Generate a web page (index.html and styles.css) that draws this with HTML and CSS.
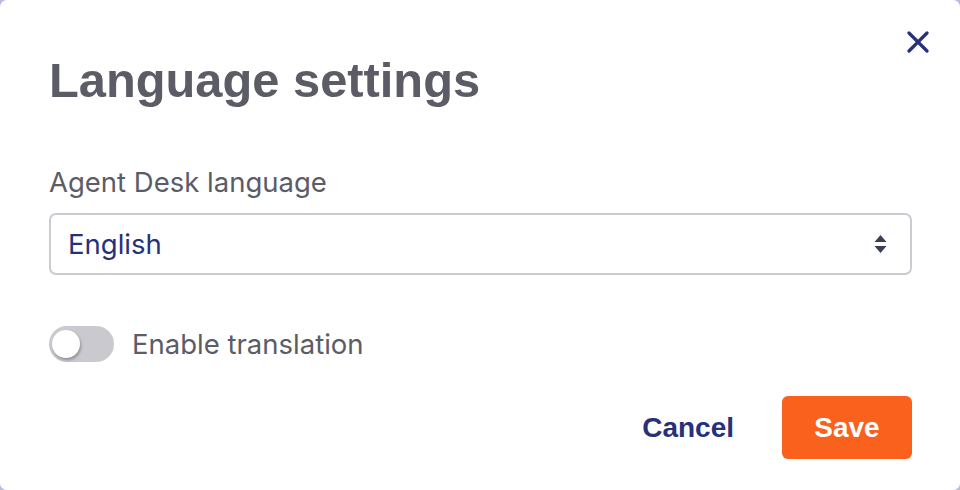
FILE: index.html
```html
<!DOCTYPE html>
<html>
<head>
<meta charset="utf-8">
<link rel="stylesheet" href="styles.css">
</head>
<body>
<div class="dialog">
  <button class="close" aria-label="Close">
    <svg width="22" height="22" viewBox="0 0 22 22"><path d="M2 2 L20 20 M20 2 L2 20" stroke="#27307a" stroke-width="3.2" stroke-linecap="round"/></svg>
  </button>
  <h1 class="title">Language settings</h1>
  <label class="label">Agent Desk language</label>
  <div class="select">
    <span class="value">English</span>
    <svg class="arrows" width="13" height="20" viewBox="0 0 13 20"><path d="M6.5 1 L12.5 8 H0.5 Z M6.5 19 L12.5 12 H0.5 Z" fill="#3a4055"/></svg>
  </div>
  <div class="toggle-row">
    <span class="toggle"><span class="knob"></span></span>
    <span class="toggle-label">Enable translation</span>
  </div>
  <div class="actions">
    <button class="cancel">Cancel</button>
    <button class="save">Save</button>
  </div>
</div>
</body>
</html>
```
FILE: styles.css
```css
html, body {
  margin: 0;
  padding: 0;
  background: #b9bce2;
  width: 960px;
  height: 490px;
  overflow: hidden;
}
.dialog {
  box-sizing: border-box;
  width: 960px;
  height: 490px;
  background: #fff;
  border-radius: 7px;
  padding: 48px 48px 0 49px;
  position: relative;
  font-family: Inter, "Liberation Sans", sans-serif;
}
.close {
  position: absolute;
  top: 31px;
  right: 31px;
  border: 0;
  background: none;
  padding: 0;
  width: 22px;
  height: 22px;
}
.close svg { display: block; }
.title {
  margin: 0;
  font-family: "Liberation Sans", Arial, sans-serif;
  font-weight: 700;
  font-size: 48.8px;
  line-height: 64px;
  color: #5b5c66;
}
.label {
  display: block;
  margin-top: 52px;
  font-size: 27.5px;
  line-height: 36px;
  color: #5b5c66;
}
.select {
  margin-top: 13px;
  box-sizing: border-box;
  height: 62px;
  border: 2px solid #cbcbd2;
  border-radius: 7px;
  display: flex;
  align-items: center;
  justify-content: space-between;
  padding: 0 23px 0 17px;
}
.value {
  font-size: 27.5px;
  color: #27307a;
}
.arrows { display: block; }
.toggle-row {
  margin-top: 51px;
  display: flex;
  align-items: center;
  gap: 18px;
  height: 36px;
}
.toggle {
  width: 65px;
  height: 36px;
  border-radius: 18px;
  background: #c9c9cf;
  position: relative;
  flex: none;
}
.knob {
  position: absolute;
  left: 3px;
  top: 4px;
  width: 28px;
  height: 28px;
  border-radius: 50%;
  background: #fff;
  box-shadow: 1px 2px 3px rgba(0,0,0,0.3);
}
.toggle-label {
  font-size: 27.5px;
  line-height: 36px;
  color: #5b5c66;
}
.actions {
  margin-top: 34px;
  display: flex;
  justify-content: flex-end;
  align-items: center;
  gap: 48px;
}
.actions button {
  font-family: "Liberation Sans", Arial, sans-serif;
  font-weight: 700;
  font-size: 28px;
  border: 0;
  cursor: pointer;
}
.cancel {
  background: none;
  color: #27307a;
  padding: 0;
}
.save {
  background: #fa611c;
  color: #fff;
  width: 130px;
  height: 63px;
  border-radius: 6px;
}
```
